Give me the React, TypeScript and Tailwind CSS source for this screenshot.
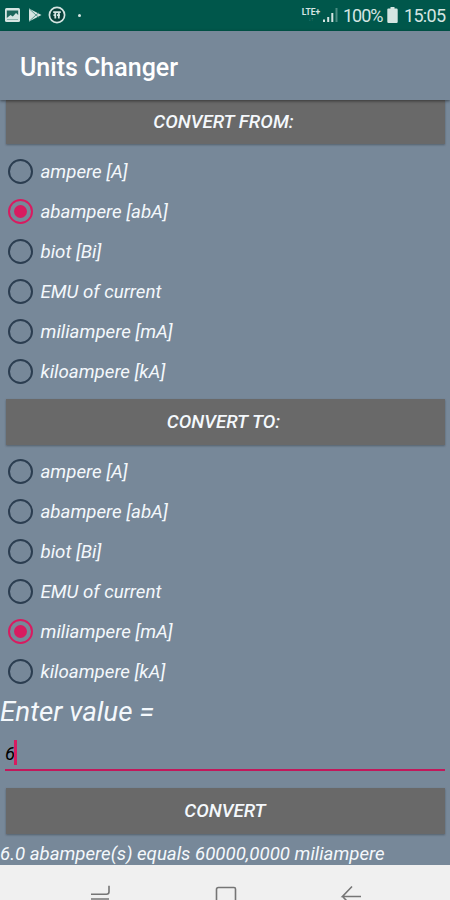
import React, { useState } from 'react';
import clsx from 'clsx';

const units = [
    'ampere [A]',
    'abampere [abA]',
    'biot [Bi]',
    'EMU of current',
    'miliampere [mA]',
    'kiloampere [kA]'
];

const StatusBar = () => (
    <div className="h-[30.5px] shrink-0 bg-[#00574b] flex items-center justify-between px-[5px] text-[#d5e5e2]">
        <div className="flex items-center">
            <svg className="w-[15px] h-[14px]" viewBox="0 0 15 14">
                <rect width="15" height="14" rx="1.5" fill="currentColor" />
                <path d="M1.8 2.5h11.4v4.5l-2.2-2-3.2 3.5-2.3-1.5-3.7 3z" fill="#1c665b" />
                <path d="M2 11.5h11" stroke="#8fb5af" />
            </svg>
            <svg className="w-[14px] h-[14px] ml-2" viewBox="0 0 14 14">
                <path d="M1 .5v13L13.5 7z" fill="currentColor" />
                <path d="M1 .5l7 6.5-7 6.5M8 7l2.5-2M8 7l2.5 2" fill="none" stroke="#5c9a91" strokeWidth="1" />
            </svg>
            <svg className="w-[18px] h-[18px] ml-[6px]" viewBox="0 0 18 18">
                <circle cx="9" cy="9" r="7.6" fill="#063f38" stroke="currentColor" strokeWidth="1.7" />
                <path d="M5.2 6.2h7.6M7.3 6.2v6.2M10.8 6.2v6.2M5.5 9.2h2M9 9.2h3" fill="none" stroke="currentColor" strokeWidth="1.8" />
            </svg>
            <span className="w-[3px] h-[3px] rounded-full bg-current ml-[12px] mt-px" />
        </div>
        <div className="flex items-center">
            <div className="w-[20px] flex flex-col items-center mr-px">
                <span className="text-[8.5px] leading-[8px] font-bold">LTE+</span>
                <span className="text-[5px] leading-[6px] text-[#4b8d83]">↓↑</span>
            </div>
            <svg className="w-[16px] h-[14px] mr-[5px]" viewBox="0 0 16 14">
                <path d="M1 11.5h2V14H1zM5.2 9h2v5h-2zM9.3 5h2v9h-2z" fill="currentColor" />
                <path d="M13.5 0h2v14h-2z" fill="#4b8d83" />
            </svg>
            <span className="text-[18px] w-[40px] tracking-[-1px] mt-px">100%</span>
            <svg className="w-[11px] h-[16px] ml-[4px] mr-[6px]" viewBox="0 0 11 16">
                <path d="M3.5 0h4v1.5h2a1.2 1.2 0 0 1 1.2 1.2v12A1.2 1.2 0 0 1 9.5 16h-8a1.2 1.2 0 0 1-1.2-1.2v-12A1.2 1.2 0 0 1 1.5 1.5h2z" fill="currentColor" />
            </svg>
            <span className="text-[18px] w-[41px] tracking-[-0.7px] mt-px">15:05</span>
        </div>
    </div>
);

const BarButton = ({ label, className }: { label: string; className?: string }) => (
    <button
        className={clsx(
            'block mx-[5.5px] bg-[#696969] text-[18.8px] font-medium italic text-center shadow-[0_1px_2px_rgba(0,0,0,0.3)]',
            className
        )}
    >
        {label}
    </button>
);

interface UnitGroupProps {
    value: string;
    onChange: (unit: string) => void;
}

const UnitGroup = ({ value, onChange }: UnitGroupProps) => (
    <div role="radiogroup">
        {units.map((unit) => {
            const checked = unit === value;
            return (
                <button
                    key={unit}
                    role="radio"
                    aria-checked={checked}
                    onClick={() => onChange(unit)}
                    className="w-full h-10 pl-2 flex items-center"
                >
                    <span
                        className={clsx(
                            'w-[25px] h-[25px] rounded-full border-[2.5px] flex items-center justify-center',
                            checked ? 'border-[#d81b60]' : 'border-[#2b3d50]'
                        )}
                    >
                        {checked && <span className="w-[13px] h-[13px] rounded-full bg-[#d81b60]" />}
                    </span>
                    <span className="ml-[7.5px] mt-[3px] text-[18.7px] italic">{unit}</span>
                </button>
            );
        })}
    </div>
);

const NavBar = () => (
    <div className="h-[35px] shrink-0 bg-[#f0f0f0] overflow-hidden">
        <svg className="w-full h-[35px]" viewBox="0 0 450 35" fill="none" stroke="#757575" strokeWidth="1.6">
            <path d="M91 29.3h15.5q2.5 0 2.5-2.5v-6M91 34h18" />
            <path d="M216.500 35V24.500q0-2 2-2h15.500q1.500 0 1.500 1.500v11" />
            <path d="M352 21.500l-9.500 10h18.500M342.500 31.500l4 4" />
        </svg>
    </div>
);

export default function App() {
    const [from, setFrom] = useState('abampere [abA]');
    const [to, setTo] = useState('miliampere [mA]');

    return (
        <div className="w-[450px] h-[900px] flex flex-col overflow-hidden bg-[#778899] text-[#f4f8fc] font-['Roboto',sans-serif]">
            <StatusBar />
            <header className="relative h-[69.5px] shrink-0 bg-[#778899] pl-5 flex items-center shadow-[0_1px_3px_rgba(0,0,0,0.5)]">
                <h1 className="text-[25px] font-medium mt-[5px] text-white">Units Changer</h1>
            </header>

            <main className="flex-1 min-h-0 flex flex-col">
                <BarButton label="CONVERT FROM:" className="h-[44px] shrink-0 mb-[7px] pr-[3px]" />
                <UnitGroup value={from} onChange={setFrom} />
                <BarButton label="CONVERT TO:" className="h-[46px] shrink-0 mt-[7.5px] mb-[6.5px] pt-[2px] pr-[3px]" />
                <UnitGroup value={to} onChange={setTo} />
                <label className="h-10 text-[27.8px] leading-[41px] italic whitespace-nowrap">Enter value =</label>
                <div className="mx-[5px] h-[39.5px] border-b-2 border-[#c2185b] flex items-center text-black">
                    <span className="text-[18.5px] italic mt-[11px]">6</span>
                    <span className="w-[2.5px] h-[25px] bg-[#d81b60] mt-[6px] -ml-px" />
                </div>
                <BarButton label="CONVERT" className="h-[46px] shrink-0 mt-[17.5px]" />
                <p className="text-[18.65px] leading-[22px] mt-[9px] italic whitespace-nowrap">
                    6.0 abampere(s) equals 60000,0000 miliampere
                </p>
            </main>
            <NavBar />
        </div>
    );
}
